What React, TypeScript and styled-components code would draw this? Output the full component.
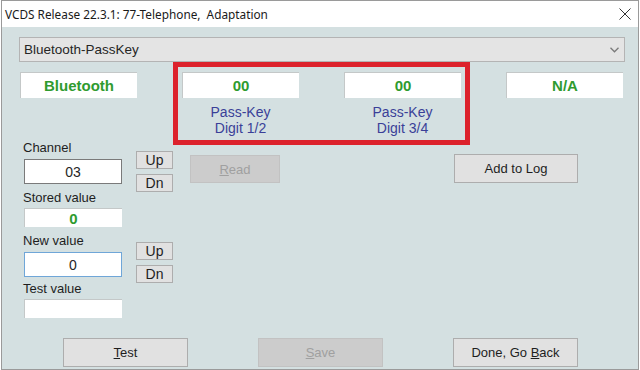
import styled, { createGlobalStyle } from "styled-components";

const GlobalStyle = createGlobalStyle`
  html, body {
    margin: 0;
    padding: 0;
    background: #ffffff;
  }
  body {
    font-family: "Liberation Sans", Arial, sans-serif;
    font-size: 13px;
    color: #1e1e1e;
  }
`;

const Window = styled.div`
  width: 636px;
  height: 368px;
  margin-left: 1px;
  border: 1px solid #9a9a9a;
  display: flex;
  flex-direction: column;
  overflow: hidden;
`;

const TitleBar = styled.div`
  height: 26px;
  flex: none;
  background: #ffffff;
  display: flex;
  align-items: center;
  justify-content: space-between;
  padding: 0 7px 0 3px;
`;

const Title = styled.span`
  font-family: "Noto Sans", "Liberation Sans", sans-serif;
  font-size: 11.8px;
  color: #1a1a1a;
  white-space: pre;
`;

const Body = styled.div`
  position: relative;
  flex: 1;
  background: #d4e0e1;
  padding: 10px 13px 0 17px;
  display: flex;
  flex-direction: column;
`;

const Dropdown = styled.div`
  height: 23px;
  background: #e4e4e4;
  border: 1px solid #b4b4b4;
  display: flex;
  align-items: center;
  justify-content: space-between;
  padding: 0 5px 0 4px;
  font-size: 13.5px;
  color: #262626;
`;

const FieldRow = styled.div`
  display: grid;
  grid-template-columns: repeat(4, 117px);
  column-gap: 45px;
  margin: 10px 0 0 1px;
`;

const FieldCol = styled.div`
  display: flex;
  flex-direction: column;
  align-items: center;
`;

const ValueBox = styled.div`
  box-sizing: border-box;
  width: 117px;
  height: 26px;
  background: #ffffff;
  border-top: 1px solid #c4c8c8;
  border-left: 1px solid #c4c8c8;
  display: flex;
  align-items: center;
  justify-content: center;
  color: #2f9b2f;
  font-weight: bold;
  font-size: 15px;
`;

const FieldLabel = styled.div`
  margin-top: 6px;
  text-align: center;
  font-size: 14px;
  line-height: 16px;
  color: #3a3f98;
`;

const Highlight = styled.div`
  position: absolute;
  left: 171px;
  top: 35px;
  width: 297px;
  height: 83px;
  box-sizing: border-box;
  border: 5px solid #dc222c;
  pointer-events: none;
`;

const Lower = styled.div`
  display: flex;
  align-items: flex-start;
  margin-top: 4px;
`;

const LeftCol = styled.div`
  width: 98px;
  margin-left: 5px;
  display: flex;
  flex-direction: column;
`;

const Label = styled.div<{ $gap?: number }>`
  line-height: 16px;
  margin-top: ${(p) => p.$gap ?? 0}px;
  margin-left: -1px;
  color: #1e1e1e;
`;

const Input = styled.div<{ $gap?: number; $focus?: boolean }>`
  box-sizing: border-box;
  height: 25px;
  margin-top: ${(p) => p.$gap ?? 3}px;
  background: #ffffff;
  border: 1px solid ${(p) => (p.$focus ? "#6fa6d8" : "#7a7a7a")};
  display: flex;
  align-items: center;
  justify-content: center;
  font-size: 14px;
  color: #262626;
`;

const ReadBox = styled.div<{ $gap?: number }>`
  box-sizing: border-box;
  height: 19px;
  margin-top: ${(p) => p.$gap ?? 2}px;
  background: #ffffff;
  border-top: 1px solid #c4c8c8;
  border-left: 1px solid #c4c8c8;
  display: flex;
  align-items: center;
  justify-content: center;
  color: #2f9b2f;
  font-weight: bold;
  font-size: 15px;
`;

const StepCol = styled.div`
  margin-left: 14px;
  margin-top: 11px;
  display: flex;
  flex-direction: column;
  gap: 5px;
`;

const StepButton = styled.button<{ $gap?: number }>`
  box-sizing: border-box;
  width: 37px;
  height: 18px;
  margin-top: ${(p) => p.$gap ?? 0}px;
  padding: 0;
  background: #e1e1e1;
  border: 1px solid #adadad;
  font-family: "Liberation Sans", Arial, sans-serif;
  font-size: 14px;
  line-height: 16px;
  color: #1e1e1e;
`;

const Button = styled.button<{ $disabled?: boolean; $w?: number }>`
  box-sizing: border-box;
  width: ${(p) => p.$w ?? 125}px;
  height: 29px;
  padding: 0;
  background: ${(p) => (p.$disabled ? "#cccccc" : "#e1e1e1")};
  border: 1px solid ${(p) => (p.$disabled ? "#c2c2c2" : "#adadad")};
  font-family: "Liberation Sans", Arial, sans-serif;
  font-size: 13px;
  color: ${(p) => (p.$disabled ? "#a0a0a0" : "#1e1e1e")};
`;

const ReadButton = styled(Button)`
  height: 28px;
  margin: 15px 0 0 17px;
`;

const AddButton = styled(Button)`
  margin: 14px 47px 0 auto;
`;

const BottomRow = styled.div`
  display: flex;
  gap: 70px;
  margin-top: 20px;
  padding-left: 44px;
`;

function Chevron() {
  return (
    <svg width="9" height="6" viewBox="0 0 9 6">
      <path d="M0.5 0.8 L4.5 4.8 L8.5 0.8" fill="none" stroke="#7a7a7a" strokeWidth="1.3" />
    </svg>
  );
}

function CloseIcon() {
  return (
    <svg width="12" height="12" viewBox="0 0 12 12">
      <path d="M0.5 0.5 L11.5 11.5 M11.5 0.5 L0.5 11.5" stroke="#333" strokeWidth="1" />
    </svg>
  );
}

export default function App() {
  return (
    <>
      <GlobalStyle />
      <Window>
        <TitleBar>
          <Title>{"VCDS Release 22.3.1: 77-Telephone,  Adaptation"}</Title>
          <CloseIcon />
        </TitleBar>
        <Body>
          <Dropdown>
            <span>Bluetooth-PassKey</span>
            <Chevron />
          </Dropdown>

          <FieldRow>
            <FieldCol>
              <ValueBox>Bluetooth</ValueBox>
            </FieldCol>
            <FieldCol>
              <ValueBox>00</ValueBox>
              <FieldLabel>
                Pass-Key
                <br />
                Digit 1/2
              </FieldLabel>
            </FieldCol>
            <FieldCol>
              <ValueBox>00</ValueBox>
              <FieldLabel>
                Pass-Key
                <br />
                Digit 3/4
              </FieldLabel>
            </FieldCol>
            <FieldCol>
              <ValueBox>N/A</ValueBox>
            </FieldCol>
          </FieldRow>

          <Highlight />

          <Lower>
            <LeftCol>
              <Label>Channel</Label>
              <Input>03</Input>
              <Label $gap={6}>Stored value</Label>
              <ReadBox>0</ReadBox>
              <Label $gap={6}>New value</Label>
              <Input $focus>0</Input>
              <Label $gap={4}>Test value</Label>
              <ReadBox />
            </LeftCol>
            <StepCol>
              <StepButton>Up</StepButton>
              <StepButton>Dn</StepButton>
              <StepButton $gap={45}>Up</StepButton>
              <StepButton>Dn</StepButton>
            </StepCol>
            <ReadButton $disabled $w={90}>
              <u>R</u>ead
            </ReadButton>
            <AddButton $w={124}>Add to Log</AddButton>
          </Lower>

          <BottomRow>
            <Button>
              <u>T</u>est
            </Button>
            <Button $disabled>
              <u>S</u>ave
            </Button>
            <Button>
              Done, Go <u>B</u>ack
            </Button>
          </BottomRow>
        </Body>
      </Window>
    </>
  );
}
